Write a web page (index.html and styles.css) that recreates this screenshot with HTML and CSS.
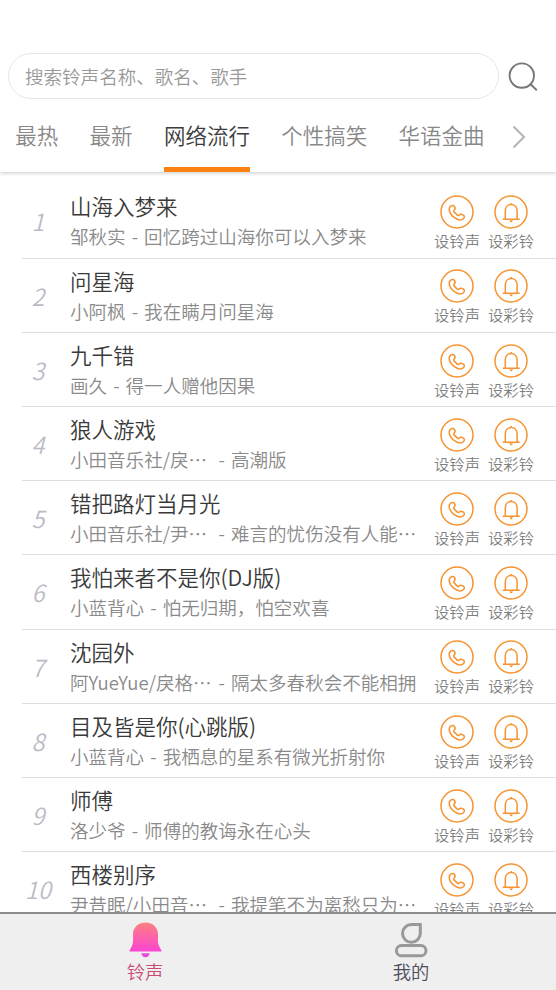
FILE: index.html
```html
<!DOCTYPE html>
<html lang="zh-CN">
<head>
<meta charset="utf-8">
<title>铃声</title>
<link rel="stylesheet" href="styles.css">
</head>
<body>
<svg class="defs" aria-hidden="true">
  <symbol id="phone" viewBox="0 0 34 34">
    <circle cx="17" cy="17" r="16"/>
    <path d="M10.300 11.500c1.300-1.300 3.400-1.300 4.300.1.900 1.500.5 2.700-.6 3.600-.5.500-.4 1.100.1 1.700l3.200 3.200c.6.500 1.200.5 1.700 0 1-1.100 2.500-1.200 4-.2 1.700 1.100 1.700 2.700.4 3.800-1.700 1.500-3.800 1.500-6.100.5-3.400-1.500-6.200-4.100-7.500-7.100-.9-2.200-.9-4.100.5-5.600z"/>
  </symbol>
  <symbol id="ring" viewBox="0 0 34 34">
    <circle cx="17" cy="17" r="16"/>
    <path d="M11.300 23.600v-7.700c0-3.900 2.400-6.500 5.900-6.500s5.900 2.600 5.900 6.500v7.700M8.700 24.200h17M17.200 9.300v-1.300M15.900 25.500l1.300 1 1.300-1"/>
  </symbol>
</svg>
<header class="header">
  <div class="search">
    <div class="search-box">搜索铃声名称、歌名、歌手</div>
    <svg class="search-icon" viewBox="0 0 30 30"><circle cx="13.800" cy="14.600" r="12.200"/><path d="M22.500 23.200l6.300 6"/></svg>
  </div>
  <nav class="tabs">
    <span class="tab">最热</span>
    <span class="tab">最新</span>
    <span class="tab active">网络流行</span>
    <span class="tab">个性搞笑</span>
    <span class="tab">华语金曲</span>
    <svg class="more" viewBox="0 0 14 24"><path d="M1.500 1.500l10.500 10.500-10.500 10.500"/></svg>
  </nav>
</header>
<main class="list">
  <div class="row"><span class="num">1</span><div class="info"><div class="title">山海入梦来</div><div class="sub"><span>邹秋实</span><i>-</i><span>回忆跨过山海你可以入梦来</span></div></div><div class="act"><svg><use href="#phone"/></svg>设铃声</div><div class="act"><svg><use href="#ring"/></svg>设彩铃</div></div>
  <div class="row"><span class="num">2</span><div class="info"><div class="title">问星海</div><div class="sub"><span>小阿枫</span><i>-</i><span>我在瞒月问星海</span></div></div><div class="act"><svg><use href="#phone"/></svg>设铃声</div><div class="act"><svg><use href="#ring"/></svg>设彩铃</div></div>
  <div class="row"><span class="num">3</span><div class="info"><div class="title">九千错</div><div class="sub"><span>画久</span><i>-</i><span>得一人赠他因果</span></div></div><div class="act"><svg><use href="#phone"/></svg>设铃声</div><div class="act"><svg><use href="#ring"/></svg>设彩铃</div></div>
  <div class="row"><span class="num">4</span><div class="info"><div class="title">狼人游戏</div><div class="sub"><span class="cut">小田音乐社/戾…</span><i>-</i><span>高潮版</span></div></div><div class="act"><svg><use href="#phone"/></svg>设铃声</div><div class="act"><svg><use href="#ring"/></svg>设彩铃</div></div>
  <div class="row"><span class="num">5</span><div class="info"><div class="title">错把路灯当月光</div><div class="sub"><span class="cut">小田音乐社/尹…</span><i>-</i><span>难言的忧伤没有人能…</span></div></div><div class="act"><svg><use href="#phone"/></svg>设铃声</div><div class="act"><svg><use href="#ring"/></svg>设彩铃</div></div>
  <div class="row"><span class="num">6</span><div class="info"><div class="title">我怕来者不是你(DJ版)</div><div class="sub"><span>小蓝背心</span><i>-</i><span>怕无归期，怕空欢喜</span></div></div><div class="act"><svg><use href="#phone"/></svg>设铃声</div><div class="act"><svg><use href="#ring"/></svg>设彩铃</div></div>
  <div class="row"><span class="num">7</span><div class="info"><div class="title">沈园外</div><div class="sub"><span class="cut">阿YueYue/戾格…</span><i>-</i><span>隔太多春秋会不能相拥</span></div></div><div class="act"><svg><use href="#phone"/></svg>设铃声</div><div class="act"><svg><use href="#ring"/></svg>设彩铃</div></div>
  <div class="row"><span class="num">8</span><div class="info"><div class="title">目及皆是你(心跳版)</div><div class="sub"><span>小蓝背心</span><i>-</i><span>我栖息的星系有微光折射你</span></div></div><div class="act"><svg><use href="#phone"/></svg>设铃声</div><div class="act"><svg><use href="#ring"/></svg>设彩铃</div></div>
  <div class="row"><span class="num">9</span><div class="info"><div class="title">师傅</div><div class="sub"><span>洛少爷</span><i>-</i><span>师傅的教诲永在心头</span></div></div><div class="act"><svg><use href="#phone"/></svg>设铃声</div><div class="act"><svg><use href="#ring"/></svg>设彩铃</div></div>
  <div class="row"><span class="num">10</span><div class="info"><div class="title">西楼别序</div><div class="sub"><span class="cut">尹昔眠/小田音…</span><i>-</i><span>我提笔不为离愁只为…</span></div></div><div class="act"><svg><use href="#phone"/></svg>设铃声</div><div class="act"><svg><use href="#ring"/></svg>设彩铃</div></div>
</main>
<footer class="bottom">
  <div class="item current">
    <svg viewBox="0 0 34 36"><defs><linearGradient id="g" x1="0" y1="0" x2="0" y2="1"><stop offset="0" stop-color="#fe8080"/><stop offset="1" stop-color="#fa45d2"/></linearGradient></defs><path fill="url(#g)" d="M17.500.5C9.800.5 5 5.500 5 12.500V19c0 3-1 5-2.200 7.300C1.300 29 1 29.500 2 29.500h31c1 0 .7-.5-.8-3.200C31 24 30 22 30 19v-6.500C30 5.500 25.200.5 17.500.5z"/><path fill="#e54bdc" d="M13.300 31.200h8.400c-.3 2.500-2 4-4.200 4s-3.900-1.500-4.200-4z"/></svg>
    <span>铃声</span>
  </div>
  <div class="item">
    <svg viewBox="0 0 34 36" class="user"><path d="M17.500 2.500h8.800v8.800a8.900 8.900 0 1 1-8.800-8.800z"/><rect x="2.400" y="23.500" width="29.600" height="10.300" rx="5.150"/></svg>
    <span>我的</span>
  </div>
</footer>
</body>
</html>
```
FILE: styles.css
```css
* { box-sizing: border-box; }
body {
  margin: 0;
  width: 556px;
  height: 990px;
  display: flex;
  flex-direction: column;
  overflow: hidden;
  background: #fff;
  font-family: "Noto Sans CJK SC", sans-serif;
  font-weight: 350;
}
.defs { display: none; }
svg { flex: none; fill: none; }
.header {
  height: 172px;
  flex: none;
  padding-top: 53px;
  box-shadow: 0 1px 4px rgba(0, 0, 0, .22);
}
.search { display: flex; align-items: center; padding-left: 8px; }
.search-box {
  width: 491px;
  height: 46px;
  border: 1.500px solid #e6e6e6;
  border-radius: 23px;
  padding-left: 16px;
  font-size: 18.550px;
  line-height: 43px;
  color: #999;
}
.search-icon { width: 30px; height: 30px; margin-left: 9px; stroke: #777; stroke-width: 1.900; }
.tabs {
  display: flex;
  height: 73px;
  padding: 0 30px 0 15.300px;
  font-size: 21.500px;
  color: #888;
}
.tab { height: 73px; margin-right: 31.300px; line-height: 71px; white-space: nowrap; }
.active { color: #3c3c3c; border-bottom: 5px solid #fb8210; }
.more { width: 14px; height: 24px; margin: 26px 0 0 -4px; stroke: #b5b5b5; stroke-width: 2; }
.list { flex: 1; min-height: 0; overflow: hidden; padding-top: 12.300px; }
.row {
  display: flex;
  height: 74.220px;
  margin-left: 22px;
  padding-right: 18px;
  border-bottom: 1px solid #dedede;
}
.num {
  width: 32px;
  margin-right: 16px;
  text-align: center;
  font-size: 23.500px;
  line-height: 74px;
  font-style: italic;
  color: #bbbbc8;
}
.info { flex: 1; min-width: 0; white-space: nowrap; }
.title { height: 37px; font-size: 21.500px; line-height: 43px; color: #3a3a3a; }
.sub { display: flex; font-size: 18.550px; line-height: 30px; color: #8a8a8a; }
.sub i { width: 18.500px; font-style: normal; text-align: center; }
.cut { width: 142.500px; }
.act {
  width: 54px;
  display: flex;
  flex-direction: column;
  align-items: center;
  padding-top: 10.800px;
  font-size: 15.300px;
  line-height: 23px;
  white-space: nowrap;
  color: #808080;
}
.act svg { width: 34px; height: 34px; stroke: #f79331; stroke-width: 1.500; }
.bottom {
  display: flex;
  height: 78px;
  flex: none;
  background: #efefef;
  border-top: 2px solid #8c8c8c;
}
.item {
  width: 266px;
  display: flex;
  flex-direction: column;
  align-items: center;
  padding-top: 8px;
  font-size: 18.300px;
  line-height: 27px;
  color: #4b4b5b;
}
.item:first-child { padding-left: 12px; width: 278px; }
.current { color: #c94d73; }
.item svg { width: 34px; height: 36px; }
.user { stroke: #999; stroke-width: 3; }
```
